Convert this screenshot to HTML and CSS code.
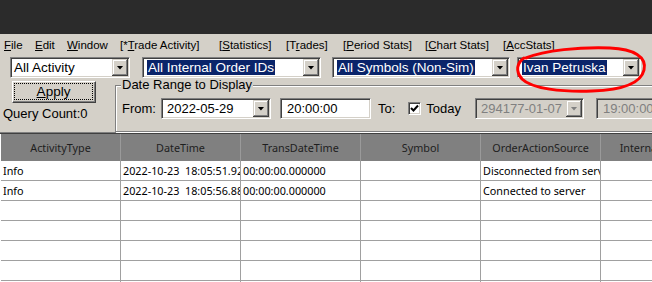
FILE: index.html
```html
<!DOCTYPE html>
<html>
<head>
<meta charset="utf-8">
<link rel="stylesheet" href="styles.css">
</head>
<body>
<div class="titlebar"></div>
<nav class="menubar">
  <span class="mi w-file"><u>F</u>ile</span>
  <span class="mi w-edit"><u>E</u>dit</span>
  <span class="mi w-window"><u>W</u>indow</span>
  <span class="mi w-trade">[*<u>T</u>rade Activity]</span>
  <span class="mi w-stats">[<u>S</u>tatistics]</span>
  <span class="mi w-trades">[T<u>r</u>ades]</span>
  <span class="mi w-period">[<u>P</u>eriod Stats]</span>
  <span class="mi w-chart">[<u>C</u>hart Stats]</span>
  <span class="mi">[<u>A</u>ccStats]</span>
</nav>
<div class="filters">
  <div class="combo c-activity"><span class="val">All Activity</span><span class="drop"><i class="tri"></i></span></div>
  <div class="combo c-orders"><span class="val"><span class="sel">All Internal Order IDs</span></span><span class="drop"><i class="tri"></i></span></div>
  <div class="combo c-symbols"><span class="val"><span class="sel">All Symbols (Non-Sim)</span></span><span class="drop"><i class="tri"></i></span></div>
  <div class="combo c-trader"><span class="val"><span class="sel">Ivan Petruska</span></span><span class="drop"><i class="tri"></i></span></div>
</div>
<div class="mid">
  <div class="side">
    <button class="apply"><span class="focus"><u>A</u>pply</span></button>
    <div class="count">Query Count:0</div>
  </div>
  <fieldset class="range">
    <legend>Date Range to Display</legend>
    <div class="range-row">
      <span class="lbl">From:</span>
      <div class="combo c-date"><span class="val v-date">2022-05-29</span><span class="drop"><i class="tri"></i></span></div>
      <div class="field c-time">20:00:00</div>
      <span class="lbl l-to">To:</span>
      <span class="check"><svg width="9" height="9" viewBox="0 0 9 9"><polyline points="1,4 3.5,6.5 8,1.5" fill="none" stroke="#000" stroke-width="2"/></svg></span>
      <span class="lbl l-today">Today</span>
      <div class="combo c-date2 disabled"><span class="val v-date">294177-01-07</span><span class="drop"><i class="tri"></i></span></div>
      <div class="field c-time2 disabled">19:00:00</div>
    </div>
  </fieldset>
</div>
<div class="grid">
  <div class="th">ActivityType</div><div class="th">DateTime</div><div class="th">TransDateTime</div><div class="th">Symbol</div><div class="th">OrderActionSource</div><div class="th">InternalOrderID</div>
  <div class="td">Info</div><div class="td">2022-10-23&nbsp;&nbsp;18:05:51.92</div><div class="td">00:00:00.000000</div><div class="td"></div><div class="td">Disconnected from server</div><div class="td"></div>
  <div class="td">Info</div><div class="td">2022-10-23&nbsp;&nbsp;18:05:56.88</div><div class="td">00:00:00.000000</div><div class="td"></div><div class="td">Connected to server</div><div class="td"></div>
  <div class="td"></div><div class="td"></div><div class="td"></div><div class="td"></div><div class="td"></div><div class="td"></div>
  <div class="td"></div><div class="td"></div><div class="td"></div><div class="td"></div><div class="td"></div><div class="td"></div>
  <div class="td"></div><div class="td"></div><div class="td"></div><div class="td"></div><div class="td"></div><div class="td"></div>
  <div class="td"></div><div class="td"></div><div class="td"></div><div class="td"></div><div class="td"></div><div class="td"></div>
  <div class="td"></div><div class="td"></div><div class="td"></div><div class="td"></div><div class="td"></div><div class="td"></div>
</div>
<svg class="annot" width="652" height="282" viewBox="0 0 652 282">
  <path d="M 526 58 C 545 50, 580 47, 610 48 C 634 49, 647 57, 644 70 C 641 83, 622 90, 592 91 C 562 92, 532 89, 522 79 C 515 71, 517 63, 524 58" fill="none" stroke="#ff0000" stroke-width="3" stroke-linecap="round"/>
</svg>
</body>
</html>
```

FILE: styles.css
```css
* { box-sizing: border-box; }
html, body { margin: 0; padding: 0; }
body {
  width: 652px;
  height: 282px;
  overflow: hidden;
  position: relative;
  background: #d4d0c8;
  font-family: "Liberation Sans", Arial, sans-serif;
  font-size: 13px;
  color: #000;
}
.titlebar { height: 34px; background: #2b2b2b; }

.menubar {
  height: 22px;
  display: flex;
  align-items: center;
  padding-left: 4px;
  font-size: 11.5px;
  white-space: nowrap;
}
.mi { flex: none; }
.w-file { width: 31px; }
.w-edit { width: 32px; }
.w-window { width: 53px; }
.w-trade { width: 99px; }
.w-stats { width: 67px; }
.w-trades { width: 57px; }
.w-period { width: 82px; }
.w-chart { width: 78px; }

.filters {
  display: flex;
  height: 21px;
  margin-top: 1px;
  font-size: 13.5px;
}
.combo {
  flex: none;
  display: flex;
  align-items: center;
  height: 21px;
  background: #fff;
  border: 1px solid;
  border-color: #808080 #fff #fff #808080;
  box-shadow: inset 1px 1px #404040, inset -1px -1px #d4d0c8;
  padding: 1px;
}
.val {
  flex: 1;
  padding-left: 2px;
  white-space: nowrap;
  overflow: hidden;
  line-height: 15px;
}
.sel {
  display: inline-block;
  background: #0a246a;
  color: #fff;
  margin-left: 1px;
  padding: 0 1px;
  line-height: 15px;
}
.drop {
  flex: none;
  width: 16px;
  height: 17px;
  background: #d4d0c8;
  box-shadow: inset -1px -1px #404040, inset 1px 1px #d4d0c8, inset -2px -2px #808080, inset 2px 2px #fff;
  display: flex;
  align-items: center;
  justify-content: center;
}
.tri {
  display: block;
  width: 7px;
  height: 4px;
  background: #000;
  clip-path: polygon(0 0, 100% 0, 50% 100%);
}
.c-activity { margin-left: 10px; width: 120px; }
.c-orders { margin-left: 12px; width: 179px; }
.c-symbols { margin-left: 11px; width: 178px; }
.c-trader { margin-left: 7px; width: 124px; }

.mid { display: flex; height: 54px; }
.side { width: 115px; flex: none; }
.apply {
  display: flex;
  margin: 3px 0 0 12px;
  width: 84px;
  height: 22px;
  padding: 1px 2px 2px 1px;
  background: #d4d0c8;
  border: 1px solid;
  border-color: #fff #404040 #404040 #fff;
  box-shadow: inset -1px -1px #808080;
  font-family: "Liberation Sans", Arial, sans-serif;
  font-size: 13.5px;
  color: #000;
}
.focus {
  flex: 1;
  display: flex;
  align-items: center;
  justify-content: center;
  border: 1px dotted #000;
  line-height: 14px;
}
.count { margin-top: 3px; padding-left: 3px; line-height: 15px; }

.range {
  flex: none;
  width: 560px;
  margin: 0;
  padding: 6px 0 5px 6px;
  border: 1px solid #808080;
  box-shadow: inset 1px 1px #fff, 1px 1px #fff;
  min-width: 0;
}
.range legend {
  padding: 0 1px;
  margin-left: -1px;
  line-height: 14px;
  background: #d4d0c8;
}
.range-row {
  display: flex;
  align-items: center;
  height: 21px;
  white-space: nowrap;
}
.lbl { flex: none; }
.c-date { margin-left: 5px; width: 110px; }
.v-date { padding-left: 4px; }
.field {
  flex: none;
  height: 21px;
  background: #fff;
  border: 1px solid;
  border-color: #808080 #fff #fff #808080;
  box-shadow: inset 1px 1px #404040, inset -1px -1px #d4d0c8;
  padding: 2px 0 0 6px;
  line-height: 15px;
  white-space: nowrap;
}
.c-time { margin-left: 9px; width: 91px; }
.l-to { margin-left: 7px; }
.check {
  flex: none;
  margin-left: 13px;
  width: 13px;
  height: 13px;
  background: #fff;
  border: 1px solid;
  border-color: #808080 #fff #fff #808080;
  box-shadow: inset 1px 1px #404040, inset -1px -1px #d4d0c8;
  display: flex;
  align-items: center;
  justify-content: center;
}
.check svg { display: block; }
.l-today { margin-left: 5px; }
.c-date2 { margin-left: 14px; width: 109px; }
.c-time2 { margin-left: 12px; width: 91px; }
.disabled { background: #d4d0c8; color: #808080; }
.disabled .tri { background: #808080; }

.grid {
  display: grid;
  grid-template-columns: repeat(6, 120px);
  padding-left: 1px;
  border-top: 1px solid #808080;
  box-shadow: inset 0 1px #404040;
  padding-top: 1px;
  font-family: "Noto Sans", "DejaVu Sans", sans-serif;
  font-size: 10.8px;
  background: #fff;
}
.th {
  height: 27px;
  line-height: 27px;
  background: #808080;
  color: #1e1e1e;
  text-align: center;
  border-right: 1px solid #9a9a9a;
  white-space: nowrap;
  overflow: hidden;
}
.td {
  height: 20px;
  line-height: 19px;
  border-right: 1px solid #a0a0a0;
  border-bottom: 1px solid #a0a0a0;
  padding-left: 2px;
  white-space: nowrap;
  overflow: hidden;
}
.annot { position: absolute; left: 0; top: 0; pointer-events: none; }
```
